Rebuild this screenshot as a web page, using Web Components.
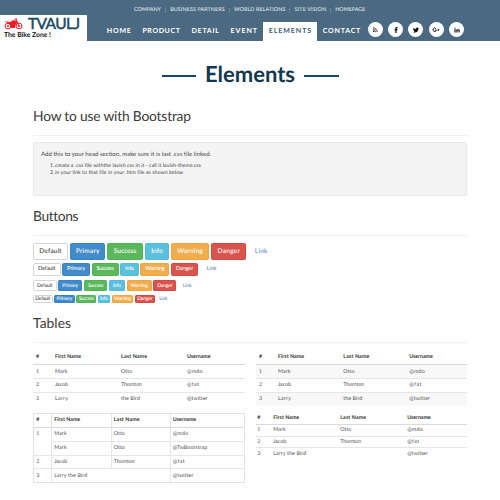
<!DOCTYPE html>
<html lang="en"><head><meta charset="utf-8"><title>Elements</title>
<style>html,body{margin:0;background:#fefefe}body{width:500px;height:500px;overflow:hidden;font-family:Lato,"Open Sans",sans-serif;text-rendering:geometricPrecision}</style></head>
<body><elements-page></elements-page>
<script>
// <fit-text w="40">: one line of text tracked to a given width
class FitText extends HTMLElement{
  constructor(){super();this.attachShadow({mode:'open'}).innerHTML='<style>:host{display:inline-block;white-space:nowrap;flex:none;line-height:1.2}span{display:inline-block}</style><span><slot></slot></span>';}
  connectedCallback(){
    const s=this.shadowRoot.querySelector('span'),w=+this.getAttribute('w');
    if(!w)return;
    const n=this.textContent.length;
    if(n>1)s.style.letterSpacing=((w-s.getBoundingClientRect().width)/(n-1))+'px';
    this.style.width=w+'px';
  }
}
customElements.define('fit-text',FitText);

const ICONS={
 rss:'<circle cx="3" cy="9" r="1.4" fill="#111"/><path d="M1.8 5.2a5 5 0 0 1 5 5M1.8 1.7a8.5 8.5 0 0 1 8.5 8.5" fill="none" stroke="#111" stroke-width="1.7"/>',
 facebook:'<path fill="#111" d="M4.6 12V6.8H3V4.6h1.6V3.2C4.6 1.2 5.8.2 7.5.2h1.7v2.1H8.1c-.8 0-1 .4-1 1v1.3h2l-.3 2.2H7.1V12z"/>',
 twitter:'<path fill="#111" d="M12 2.4l-1.2 1.2C10.8 8 7.8 11 4 11 2.4 11 1 10.6 0 9.9c1.3.1 2.6-.3 3.5-1-1.1 0-2-.8-2.3-1.8h1C1 6.8.3 5.8.3 4.6l1.1.3C.3 4.1 0 2.7.7 1.6 1.9 3.1 3.7 4 5.8 4.1 5.5 2.5 6.6 1 8.3 1c.7 0 1.4.3 1.8.8l1.6-.6-1.1 1.4z"/>',
 google:'<path d="M6 3.2A3.5 3.5 0 1 0 6.8 6.3H3.6" fill="none" stroke="#111" stroke-width="1.8"/><path d="M8.5 5.8h4.4M10.7 3.6v4.4" stroke="#111" stroke-width="1.4"/>',
 linkedin:'<circle cx="2" cy="2.2" r="1.4" fill="#111"/><path fill="#111" d="M.9 4.5h2.3V11H.9zM4.7 4.5h2.2v.9c1.2-1.7 4.5-1.4 4.5 1.8V11H9.1V7.7c0-2-2.1-1.7-2.1 0V11H4.7z"/>'
};
class SocialIcon extends HTMLElement{
  constructor(){super();this.attachShadow({mode:'open'});}
  connectedCallback(){this.shadowRoot.innerHTML='<style>:host{display:flex;width:15px;height:15px;border-radius:50%;background:#fff;align-items:center;justify-content:center}svg{width:6px;height:6px;overflow:visible}</style><svg viewBox="0 0 12 12">'+ICONS[this.getAttribute('name')]+'</svg>';}
}
customElements.define('social-icon',SocialIcon);

class BrandLogo extends HTMLElement{
  constructor(){super();this.attachShadow({mode:'open'}).innerHTML=`<style>
  :host{display:block;width:87px;height:26px;background:#fff;box-sizing:border-box;padding:0 0 0 4px}
  .top{display:flex;height:15px;align-items:center;gap:5px;font-size:15.5px;color:#18475f;-webkit-text-stroke:.45px #18475f}
  .top svg{width:19px;height:12px;margin-top:3px}.top fit-text{margin-top:3px;line-height:13px}
  .tag{height:10px;display:flex;align-items:center;font-size:6.8px;font-weight:700;color:#111}.tag fit-text{line-height:8px}
  </style><div class="top"><svg viewBox="0 0 19 12" fill="none" stroke="#ee1c25"><circle cx="4" cy="8" r="2.9" stroke-width="1"/><circle cx="15" cy="8" r="2.9" stroke-width="1"/><circle cx="4" cy="8" r=".6" fill="#ee1c25"/><circle cx="15" cy="8" r=".6" fill="#ee1c25"/><path d="M12 1l3 7M10.5 1.2L13 1" stroke-width="1"/><path fill="#ee1c25" stroke="none" d="M.2 3.3l4.8.4c1 .5 1.6.4 2.2-.3 1-1.4 3.8-1.4 5.4-.3l.9 1.300-2 2.500-.4 3H7.300L5.400 6.600 2.600 4.600z"/></svg><fit-text w="52">TVAULJ</fit-text></div><div class="tag"><fit-text w="47">The Bike Zone !</fit-text></div>`;}
}
customElements.define('brand-logo',BrandLogo);

class SiteHeader extends HTMLElement{
  constructor(){super();
  const top=[['COMPANY',27],['BUSINESS PARTNERS',54.5],['WORLD RELATIONS',51.5],['SITE VISION',31.5],['HOMEPAGE',30]];
  const nav=[['HOME',24],['PRODUCT',37.5],['DETAIL',27.5],['EVENT',26.5],['ELEMENTS',42.5],['CONTACT',37.5]];
  this.attachShadow({mode:'open'}).innerHTML=`<style>
  :host{display:grid;grid-template-columns:87px 1fr;height:41px;background:#4b6a81;color:#fff}
  brand-logo{margin-top:15px}
  .top{display:flex;align-items:center;padding-left:47px;height:21px;margin-bottom:-1px;font-size:5.4px;color:#e9eff3}
  .top i{width:1px;height:5px;background:#6c8698;margin:0 4.1px}
  .row{display:flex;height:21px;align-items:center;margin-left:14px}
  nav{display:flex;height:19px;align-self:flex-end;font-size:7px;font-weight:700}
  nav span{display:flex;align-items:center;padding:0 5.8px}
  nav .on{background:#fff;color:#3d607a}
  .soc{display:flex;gap:5.3px;margin:-2px 0 0 1.8px}
  </style><brand-logo></brand-logo><div><div class="top">${top.map(t=>`<fit-text w="${t[1]}">${t[0]}</fit-text>`).join('<i></i>')}</div>
  <div class="row"><nav>${nav.map(t=>`<span class="${t[0]=='ELEMENTS'?'on':''}"><fit-text w="${t[1]}">${t[0]}</fit-text></span>`).join('')}</nav><div class="soc">${Object.keys(ICONS).map(k=>`<social-icon name="${k}"></social-icon>`).join('')}</div></div></div>`;}
}
customElements.define('site-header',SiteHeader);

class SectionHeading extends HTMLElement{
  constructor(){super();this.attachShadow({mode:'open'}).innerHTML='<style>:host{display:flex;height:35px;box-sizing:border-box;border-bottom:1px solid #f0f0f0;font-size:13.8px;color:#3a3a3a;padding-top:6.5px;align-items:flex-start}</style><slot></slot>';}
}
customElements.define('section-heading',SectionHeading);

class ButtonRow extends HTMLElement{
  constructor(){super();this.attachShadow({mode:'open'});}
  connectedCallback(){
    const list=k=>this.getAttribute(k).split(',').map(Number);
    const w=list('widths'),t=list('texts'),h=this.getAttribute('height'),f=this.getAttribute('size'),g=this.getAttribute('gap'),lp=this.getAttribute('link-pad');
    const n=['Default','Primary','Success','Info','Warning','Danger'],c=['#fff','#428bca','#5cb85c','#5bc0de','#f0ad4e','#d9534f'],b=['#d5d5d5','#357ebd','#4cae4c','#46b8da','#eea236','#d43f3a'];
    this.shadowRoot.innerHTML=`<style>:host{display:flex;gap:${g}px;height:${h}px;font-size:${f}px;align-items:center}
    b{display:flex;font-weight:500;box-sizing:border-box;height:100%;align-items:center;justify-content:center;border:1px solid;border-radius:${h>12?2:1.5}px;color:#fff}
    .link{color:#4f82b3;margin-left:${lp}px}</style>`+n.map((x,i)=>`<b style="width:${w[i]}px;background:${c[i]};border-color:${b[i]}${i?'90':''};${i?'':'color:#444'}"><fit-text w="${t[i]}">${x}</fit-text></b>`).join('')+`<fit-text class="link" w="${t[6]}">Link</fit-text>`;
  }
}
customElements.define('button-row',ButtonRow);

const W={'#':0,'1':0,'2':0,'3':0,'First Name':26,'Last Name':26,'Username':23.5,'Mark':12.5,'Otto':11,'@mdo':15.5,'Jacob':13,'Thornton':21,'@fat':12,'Larry':13,'the Bird':19,'@twitter':20.5,'@TwBootstrap':34.5,'Larry the Bird':33};
const HEAD=['#','First Name','Last Name','Username'];
const KINDS={
 plain:[HEAD,['1','Mark','Otto','@mdo'],['2','Jacob','Thornton','@fat'],['3','Larry','the Bird','@twitter']],
 bordered:[HEAD,['1','Mark','Otto','@mdo'],['','Mark','Otto','@TwBootstrap'],['2','Jacob','Thornton','@fat'],['3','Larry the Bird','','@twitter']],
 condensed:[HEAD,['1','Mark','Otto','@mdo'],['2','Jacob','Thornton','@fat'],['3','Larry the Bird','','@twitter']]
};
KINDS.striped=KINDS.plain;
class DataTable extends HTMLElement{
  constructor(){super();this.attachShadow({mode:'open'});}
  connectedCallback(){
    const k=this.getAttribute('kind');
    const cell=(t,j,i)=>{
      if(k=='bordered'&&i==4&&j==2)return '';
      return `<span class="${k=='bordered'&&i==4&&j==1?'wide':''}">${t===''?'':`<fit-text w="${W[t]||0}">${t}</fit-text>`}</span>`;};
    this.shadowRoot.innerHTML=`<style>:host{display:block;font-size:5.3px;color:#505050}
    .r{display:grid;grid-template-columns:19px 66px 66px 1fr;height:13.8px;box-sizing:border-box;border-top:1px solid #e6e6e6}
    .r:first-of-type{border-top:0;font-weight:700;color:#333}.r:nth-of-type(2){border-top-color:#dadada}
    span{display:flex;align-items:center;padding-left:3px;box-sizing:border-box}
    :host([kind=striped]) .r:nth-of-type(even){background:#f8f8f8}
    :host([kind=striped]) .r{grid-template-columns:19px 65.3px 66px 1fr}
    :host([kind=condensed]) .r{grid-template-columns:16px 67px 67px 1fr;height:11.65px}
    :host([kind=condensed]) .r:first-of-type{height:12px}
    :host([kind=condensed]) span{padding-left:1.2px}
    :host([kind=bordered]){border:1px solid #e3e3e3}
    :host([kind=bordered]) .r{grid-template-columns:17px 59.5px 59px 1fr}
    :host([kind=bordered]) .r:first-of-type{height:12.8px}
    :host([kind=bordered]) span{padding-left:2.2px}
    :host([kind=bordered]) span+span{border-left:1px solid #e6e6e6}
    .wide{grid-column:span 2}
    :host([kind=bordered]) .r:nth-of-type(3){border-top:0}:host([kind=bordered]) .r:nth-of-type(3) span+span{border-top:1px solid #e6e6e6}
    </style>`+KINDS[k].map((r,i)=>`<div class="r">${r.map((t,j)=>cell(t,j,i)).join('')}</div>`).join('');
  }
}
customElements.define('data-table',DataTable);

class ElementsPage extends HTMLElement{
  constructor(){super();this.attachShadow({mode:'open'}).innerHTML=`<style>
  :host{display:block}
  .title{display:flex;justify-content:center;align-items:center;gap:9px;height:60px;padding-top:4px;box-sizing:border-box;font-size:22px;font-weight:700;color:#12384f}
  .title i{width:34.5px;height:1.4px;background:#194761;margin-top:6px}
  .title fit-text{margin-top:2px}
  main{margin:0 33px}
  .well{height:54px;box-sizing:border-box;background:#f4f4f4;border:1px solid #e9e9e9;border-radius:2px;margin:6px 0 5px;padding:8px 7px;font-size:6px;color:#444}
  .well>fit-text{display:block}
  ol{list-style:none;margin:4px 0 0 9px;padding:0;font-size:5.2px}li{display:flex;gap:2px;height:7.2px;align-items:center}li span{width:3px}
  .buttons{display:grid;margin:7px 0 5px}
  .tables{display:grid;grid-template-columns:212px 211px;gap:0 11px;padding-top:7.5px;align-items:start}
  .low data-table:last-child{margin-top:-1px}
  </style><site-header></site-header>
  <div class="title"><i></i><fit-text w="90">Elements</fit-text><i></i></div>
  <main>
  <section-heading><fit-text w="158">How to use with Bootstrap</fit-text></section-heading>
  <div class="well"><fit-text w="170">Add this to your head section, make sure it is last .css file linked.</fit-text>
  <ol><li><span>1.</span><fit-text w="146">create a .css file withthe lavish css in it - call it lavish-theme.css</fit-text></li><li><span>2.</span><fit-text w="128">in your link to that file in your .htm file as shown below</fit-text></li></ol></div>
  <section-heading><fit-text w="45">Buttons</fit-text></section-heading>
  <div class="buttons">
  <button-row height="17" size="6.6" gap="1.9" link-pad="6.5" widths="35,35.5,35.5,24.5,38,35.5" texts="22.5,23.5,22.5,11.5,25.5,22.5,12.5"></button-row>
  <button-row style="margin-top:3px" height="13" size="5.6" gap="1.6" link-pad="7" widths="27.5,28,27,18.5,29,27" texts="17.5,18,17.5,9,19.5,17.5,10"></button-row>
  <button-row style="margin-top:4px" height="11" size="5" gap="1.7" link-pad="4.5" widths="23.5,24,23.5,16,25,23" texts="15.5,16,15.5,8,17,15.5,9"></button-row>
  <button-row style="margin-top:4px" height="8" size="5" gap="1.7" link-pad="2.5" widths="19.5,20.5,20,12,21.5,20" texts="15,16,15.5,8,17,15.5,8.5"></button-row>
  </div>
  <section-heading><fit-text w="38">Tables</fit-text></section-heading>
  <div class="tables"><data-table kind="plain"></data-table><data-table kind="striped"></data-table></div>
  <div class="tables low"><data-table kind="bordered"></data-table><data-table kind="condensed"></data-table></div>
  </main>`;}
}
customElements.define('elements-page',ElementsPage);
</script></body></html>
